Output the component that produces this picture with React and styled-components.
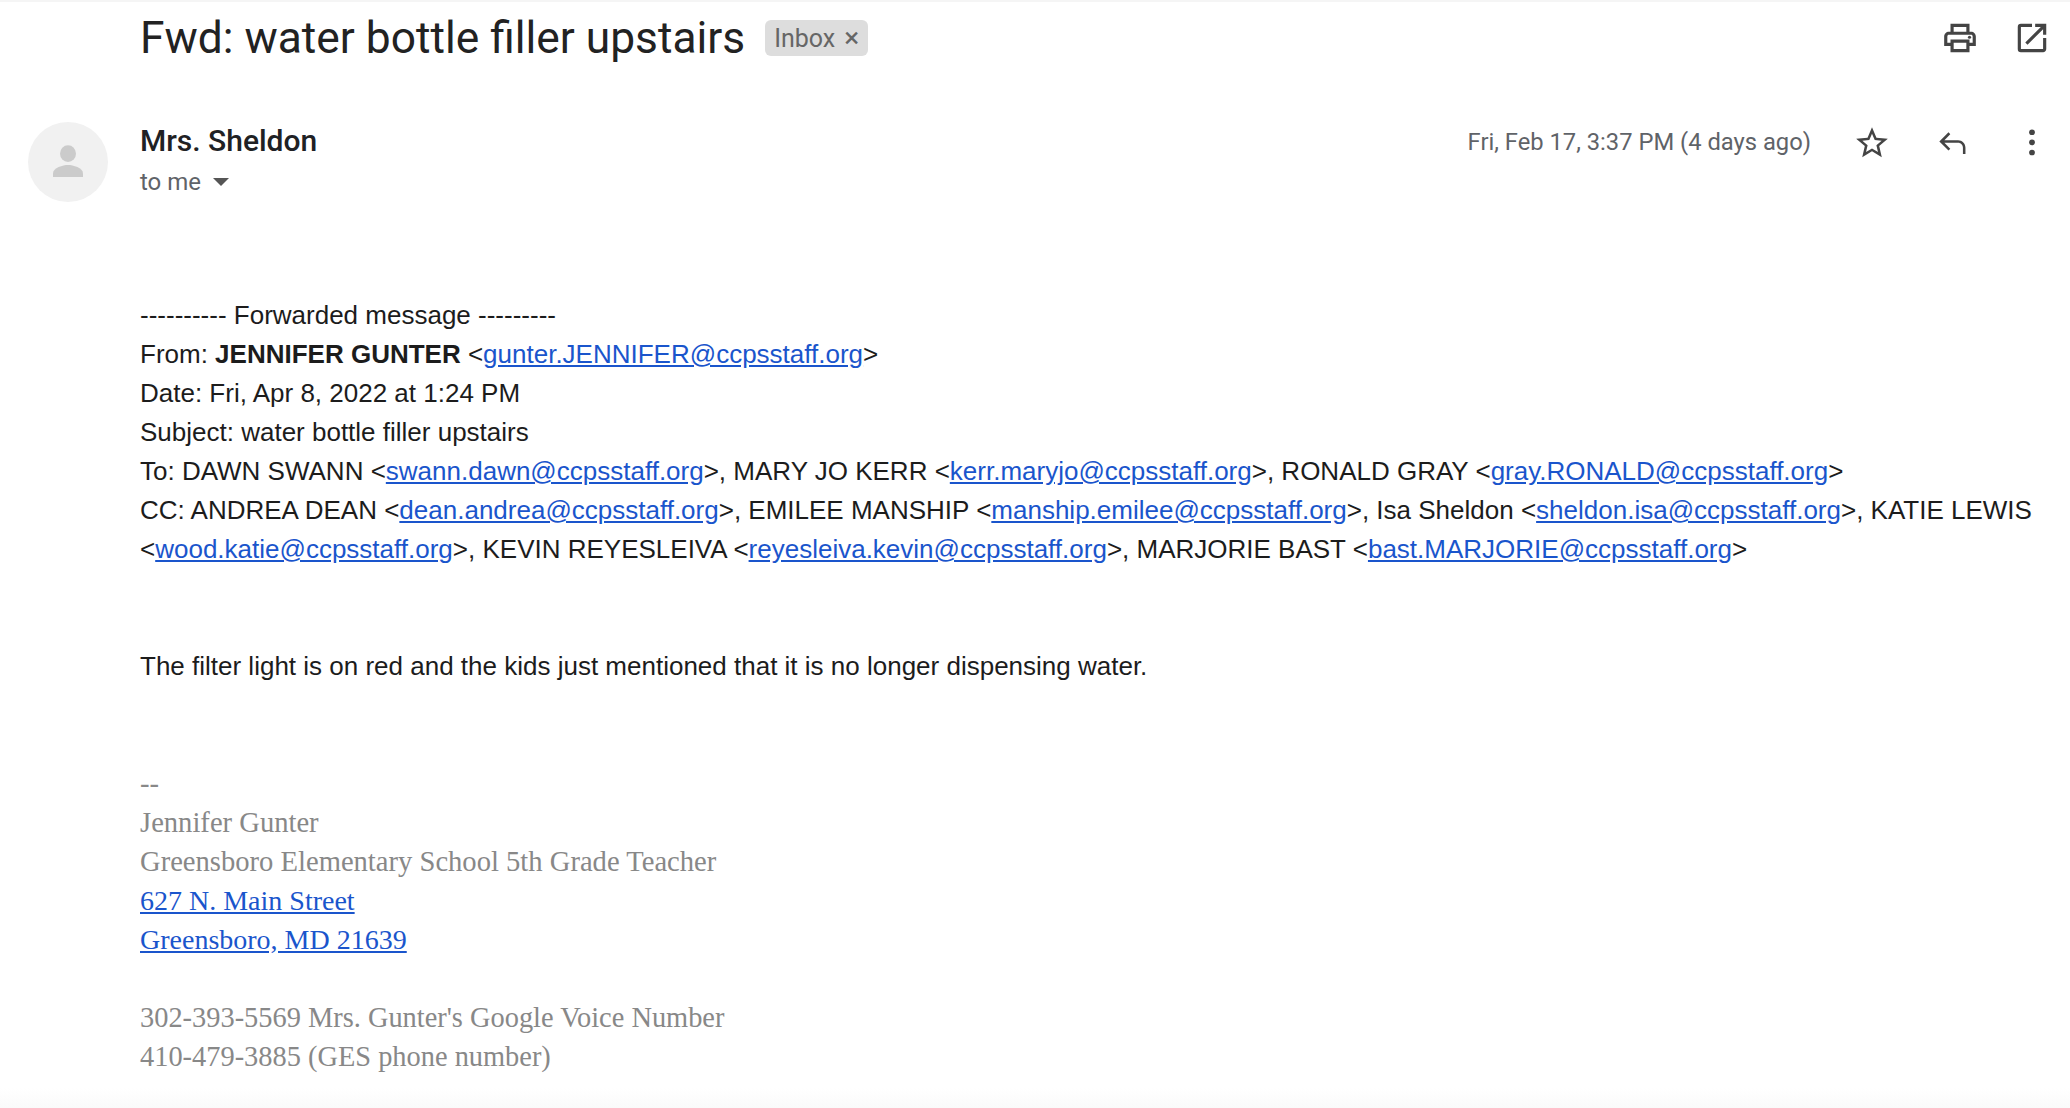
import React from 'react';
import styled, { createGlobalStyle } from 'styled-components';

const GlobalStyle = createGlobalStyle`
  html, body {
    margin: 0;
    padding: 0;
    background: #fff;
  }
  body {
    font-family: "Liberation Sans", Arial, sans-serif;
  }
`;

const Page = styled.div`
  width: 2070px;
  height: 1108px;
  box-sizing: border-box;
  overflow: hidden;
  display: flex;
  flex-direction: column;
  border-top: 2px solid #f5f5f5;
`;

const SubjectBar = styled.div`
  height: 72px;
  display: flex;
  align-items: center;
  padding: 0 19px 0 140px;
`;

const Subject = styled.h1`
  margin: 0;
  font-family: Roboto, sans-serif;
  font-size: 44.3px;
  font-weight: 400;
  color: #222;
`;

const Chip = styled.span`
  margin-left: 20px;
  height: 36px;
  width: 103px;
  box-sizing: border-box;
  padding: 0 9px;
  display: flex;
  align-items: center;
  justify-content: space-between;
  background: #ddd;
  border-radius: 6px;
  font-family: Roboto, sans-serif;
  font-size: 25px;
  color: #666;
`;

const ChipClose = styled.span`
  font-size: 28px;
  line-height: 1;
`;

const SubjectActions = styled.div`
  margin-left: auto;
  display: flex;
  gap: 34px;
`;

const Icon = styled.svg`
  display: block;
  width: 38px;
  height: 38px;
  fill: #444;
`;

const MessageHead = styled.div`
  margin-top: 48px;
  display: flex;
  align-items: flex-start;
  padding: 0 19px 0 28px;
`;

const Avatar = styled.div`
  width: 80px;
  height: 80px;
  flex: none;
  margin-right: 32px;
  border-radius: 50%;
  background: #f1f1f1;
  display: flex;
  align-items: center;
  justify-content: center;
`;

const AvatarIcon = styled.svg`
  width: 48px;
  height: 48px;
  fill: #cbcbcb;
`;

const Sender = styled.div`
  display: flex;
  flex-direction: column;
`;

const SenderName = styled.div`
  font-family: Roboto, sans-serif;
  font-size: 30px;
  font-weight: 500;
  line-height: 38px;
  color: #202124;
`;

const Recipient = styled.div`
  margin-top: 3px;
  display: flex;
  align-items: center;
  gap: 12px;
  font-family: Roboto, sans-serif;
  font-size: 24px;
  line-height: 38px;
  color: #5f6368;
`;

const Caret = styled.span`
  width: 0;
  height: 0;
  border-left: 8px solid transparent;
  border-right: 8px solid transparent;
  border-top: 8px solid #555;
`;

const MessageMeta = styled.div`
  margin-left: auto;
  display: flex;
  align-items: center;
  height: 38px;
`;

const DateText = styled.span`
  margin: 1px 42px 0 0;
  font-family: Roboto, sans-serif;
  font-size: 23.75px;
  color: #5f6368;
`;

const MetaActions = styled.div`
  display: flex;
  gap: 42px;
  padding-top: 4px;
`;

const Body = styled.div`
  margin-top: 94px;
  padding: 0 30px 0 140px;
  font-size: 26px;
  line-height: 39px;
  color: #1c1c1c;
`;

const Line = styled.div`
  min-height: 39px;
`;

const Gap = styled.div`
  height: ${(p) => p.$size}px;
`;

const Mail = styled.a`
  color: #1a55cc;
  text-decoration: underline;
`;

const Signature = styled.div`
  font-family: "Liberation Serif", serif;
  font-size: 28.6px;
  line-height: 39px;
  color: #888;
`;

const AddressLine = styled(Line)`
  font-size: 28px;
`;

const PhoneLine = styled(Line)`
  font-size: 28.4px;
`;

const Strip = styled.div`
  margin-top: auto;
  height: 20px;
  background: linear-gradient(#fff, #fafafa);
`;

const mailLink = (address) => <Mail href={`mailto:${address}`}>{address}</Mail>;

export default function App() {
  return (
    <>
      <GlobalStyle />
      <Page>
        <SubjectBar>
          <Subject>Fwd: water bottle filler upstairs</Subject>
          <Chip>
            Inbox
            <ChipClose>×</ChipClose>
          </Chip>
          <SubjectActions>
            <Icon viewBox="0 0 24 24">
              <path d="M19 8h-1V3H6v5H5c-1.66 0-3 1.34-3 3v6h4v4h12v-4h4v-6c0-1.66-1.34-3-3-3zM8 5h8v3H8V5zm8 14H8v-4h8v4zm4-4h-2v-2H6v2H4v-4c0-.55.45-1 1-1h14c.55 0 1 .45 1 1v4z" />
              <circle cx="18" cy="11.5" r="1" />
            </Icon>
            <Icon viewBox="0 0 24 24">
              <path d="M19 19H5V5h7V3H5a2 2 0 0 0-2 2v14a2 2 0 0 0 2 2h14c1.1 0 2-.9 2-2v-7h-2v7zM14 3v2h3.59l-9.83 9.83 1.41 1.41L19 6.41V10h2V3h-7z" />
            </Icon>
          </SubjectActions>
        </SubjectBar>

        <MessageHead>
          <Avatar>
            <AvatarIcon viewBox="0 0 24 24">
              <ellipse cx="12" cy="7.8" rx="4" ry="4.2" />
              <path d="M4.5 19.5v-1.8c0-2.9 5-4.2 7.5-4.2s7.5 1.3 7.5 4.2v1.8z" />
            </AvatarIcon>
          </Avatar>
          <Sender>
            <SenderName>Mrs. Sheldon</SenderName>
            <Recipient>
              to me
              <Caret />
            </Recipient>
          </Sender>
          <MessageMeta>
            <DateText>Fri, Feb 17, 3:37 PM (4 days ago)</DateText>
            <MetaActions>
              <Icon viewBox="0 0 24 24">
                <path d="M22 9.24l-7.19-.62L12 2 9.19 8.63 2 9.24l5.46 4.73L5.82 21 12 17.27 18.18 21l-1.63-7.03L22 9.24zM12 15.4l-3.76 2.27 1-4.28-3.32-2.88 4.38-.38L12 6.1l1.71 4.04 4.38.38-3.32 2.88 1 4.28L12 15.4z" />
              </Icon>
              <Icon viewBox="0 0 24 24">
                <path d="M20.5 19h-1.6v-4c0-1.8-1.3-3.2-3.1-3.2H7.2l3.7 3.8L9.8 16.8 4 11l5.8-5.8 1.1 1.2-3.7 3.8h8.6c2.7 0 4.7 2.1 4.7 4.8v4z" />
              </Icon>
              <Icon viewBox="0 0 24 24">
                <circle cx="12" cy="5.2" r="1.8" />
                <circle cx="12" cy="11.6" r="1.8" />
                <circle cx="12" cy="18" r="1.8" />
              </Icon>
            </MetaActions>
          </MessageMeta>
        </MessageHead>

        <Body>
          <Line>---------- Forwarded message ---------</Line>
          <Line>From: <strong>JENNIFER GUNTER</strong> &lt;{mailLink('gunter.JENNIFER@ccpsstaff.org')}&gt;</Line>
          <Line>Date: Fri, Apr 8, 2022 at 1:24 PM</Line>
          <Line>Subject: water bottle filler upstairs</Line>
          <Line>To: DAWN SWANN &lt;{mailLink('swann.dawn@ccpsstaff.org')}&gt;, MARY JO KERR &lt;{mailLink('kerr.maryjo@ccpsstaff.org')}&gt;, RONALD GRAY &lt;{mailLink('gray.RONALD@ccpsstaff.org')}&gt;</Line>
          <Line>CC: ANDREA DEAN &lt;{mailLink('dean.andrea@ccpsstaff.org')}&gt;, EMILEE MANSHIP &lt;{mailLink('manship.emilee@ccpsstaff.org')}&gt;, Isa Sheldon &lt;{mailLink('sheldon.isa@ccpsstaff.org')}&gt;, KATIE LEWIS</Line>
          <Line>&lt;{mailLink('wood.katie@ccpsstaff.org')}&gt;, KEVIN REYESLEIVA &lt;{mailLink('reyesleiva.kevin@ccpsstaff.org')}&gt;, MARJORIE BAST &lt;{mailLink('bast.MARJORIE@ccpsstaff.org')}&gt;</Line>
          <Gap $size={78} />
          <Line>The filter light is on red and the kids just mentioned that it is no longer dispensing water.</Line>
          <Gap $size={78} />
          <Signature>
            <Line>--</Line>
            <Line>Jennifer Gunter</Line>
            <Line>Greensboro Elementary School 5th Grade Teacher</Line>
            <AddressLine><Mail href="#">627 N. Main Street</Mail></AddressLine>
            <AddressLine><Mail href="#">Greensboro, MD 21639</Mail></AddressLine>
            <Gap $size={39} />
            <PhoneLine>302-393-5569 Mrs. Gunter's Google Voice Number</PhoneLine>
            <PhoneLine>410-479-3885 (GES phone number)</PhoneLine>
          </Signature>
        </Body>
        <Strip />
      </Page>
    </>
  );
}
